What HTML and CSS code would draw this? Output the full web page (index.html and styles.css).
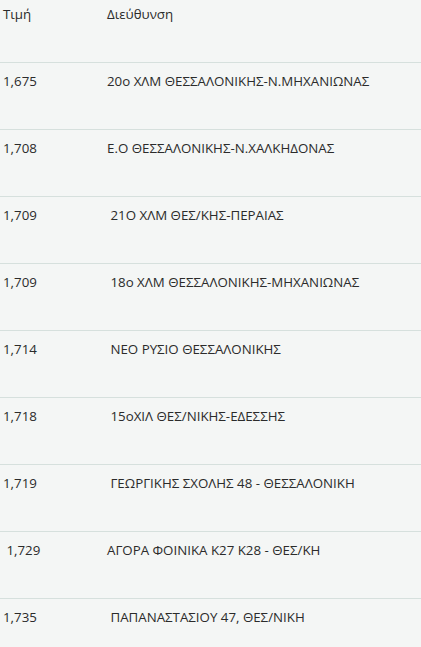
FILE: index.html
```html
<!DOCTYPE html>
<html lang="el">
<head>
<meta charset="utf-8">
<link rel="stylesheet" href="styles.css">
</head>
<body>
<div class="table">
  <div class="row head"><div class="price">Τιμή</div><div class="addr">Διεύθυνση</div></div>
  <div class="row"><div class="price">1,675</div><div class="addr">20o ΧΛΜ ΘΕΣΣΑΛΟΝΙΚΗΣ-Ν.ΜΗΧΑΝΙΩΝΑΣ</div></div>
  <div class="row"><div class="price">1,708</div><div class="addr">Ε.Ο ΘΕΣΣΑΛΟΝΙΚΗΣ-Ν.ΧΑΛΚΗΔΟΝΑΣ</div></div>
  <div class="row"><div class="price">1,709</div><div class="addr">&nbsp;21Ο ΧΛΜ ΘΕΣ/ΚΗΣ-ΠΕΡΑΙΑΣ</div></div>
  <div class="row"><div class="price">1,709</div><div class="addr">&nbsp;18ο ΧΛΜ ΘΕΣΣΑΛΟΝΙΚΗΣ-ΜΗΧΑΝΙΩΝΑΣ</div></div>
  <div class="row"><div class="price">1,714</div><div class="addr">&nbsp;ΝΕΟ ΡΥΣΙΟ ΘΕΣΣΑΛΟΝΙΚΗΣ</div></div>
  <div class="row"><div class="price">1,718</div><div class="addr">&nbsp;15οΧΙΛ ΘΕΣ/ΝΙΚΗΣ-ΕΔΕΣΣΗΣ</div></div>
  <div class="row"><div class="price">1,719</div><div class="addr">&nbsp;ΓΕΩΡΓΙΚΗΣ ΣΧΟΛΗΣ 48 - ΘΕΣΣΑΛΟΝΙΚΗ</div></div>
  <div class="row"><div class="price">&nbsp;1,729</div><div class="addr">ΑΓΟΡΑ ΦΟΙΝΙΚΑ Κ27 Κ28 - ΘΕΣ/ΚΗ</div></div>
  <div class="row"><div class="price">1,735</div><div class="addr">&nbsp;ΠΑΠΑΝΑΣΤΑΣΙΟΥ 47, ΘΕΣ/ΝΙΚΗ</div></div>
</div>
</body>
</html>
```
FILE: styles.css
```css
html, body {
  margin: 0;
  padding: 0;
  background: #f4f6f5;
}
body {
  font-family: "Open Sans", "Noto Sans", sans-serif;
  font-size: 13.3px;
  color: #2b2b2b;
}
.table {
  display: flex;
  flex-direction: column;
}
.row {
  display: flex;
  height: 66px;
  border-bottom: 1px solid #d6e0dd;
}
.row > div {
  padding: 9px 3px 0;
  line-height: 18px;
  white-space: pre;
}
.row.head {
  height: 62px;
}
.row.head > div {
  padding-top: 5px;
}
.price {
  width: 98px;
  flex: none;
}
.addr {
  flex: 1;
}
```
